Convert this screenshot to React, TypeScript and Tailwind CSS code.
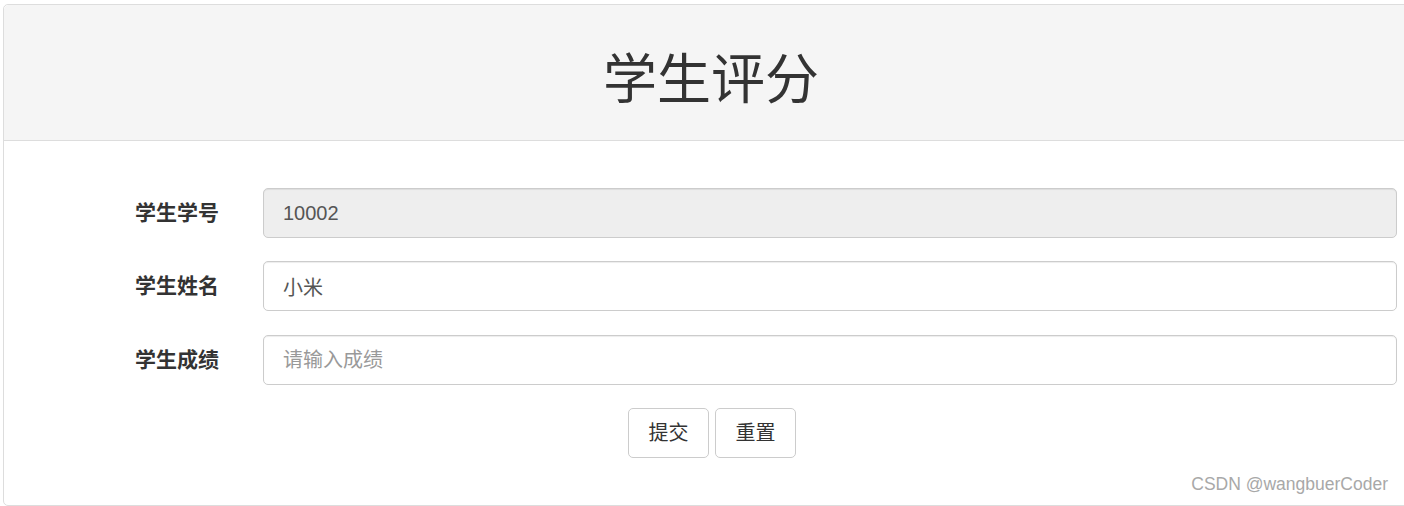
const font = "font-['Liberation_Sans','Noto_Sans_CJK_SC',sans-serif]";

function Field({
  label,
  value,
  placeholder,
  disabled,
  className = "",
}: {
  label: string;
  value?: string;
  placeholder?: string;
  disabled?: boolean;
  className?: string;
}) {
  return (
    <div className={"flex items-center h-[50px] " + className}>
      <label className="w-[215px] text-right text-[21px] font-bold text-[#333]">{label}</label>
      <input
        readOnly
        disabled={disabled}
        value={value ?? ""}
        placeholder={placeholder}
        className={
          "ml-[44px] w-[1134px] h-[50px] px-[19px] text-[20px] text-[#555] border border-[#ccc] rounded-[5px] outline-none placeholder:text-[#999] shadow-[inset_0_1px_1px_rgba(0,0,0,0.075)] " +
          (disabled ? "bg-[#eee]" : "bg-white")
        }
      />
    </div>
  );
}

export default function App() {
  return (
    <div className={`relative w-[1404px] h-[506px] overflow-hidden bg-white ${font}`}>
      <div className="ml-[3px] mt-[4px] w-[1430px] h-[502px] border border-[#ddd] rounded-[5px] bg-white">
        <div className="h-[136px] bg-[#f5f5f5] border-b border-[#ddd] rounded-t-[5px] flex items-center justify-center pt-[14px]">
          <h1 className="text-[54px] leading-none text-[#333] pr-[14px]">学生评分</h1>
        </div>
        <div className="pt-[47px] flex flex-col">
          <Field label="学生学号" value="10002" disabled />
          <Field label="学生姓名" value="小米" className="mt-[23px]" />
          <Field label="学生成绩" placeholder="请输入成绩" className="mt-[24px]" />
          <div className="mt-[23px] flex justify-center gap-[6px] pr-[12px]">
            <button className="w-[81px] h-[50px] border border-[#ccc] rounded-[5px] bg-white text-[20px] text-[#333]">提交</button>
            <button className="w-[81px] h-[50px] border border-[#ccc] rounded-[5px] bg-white text-[20px] text-[#333]">重置</button>
          </div>
        </div>
      </div>
      <span className="absolute right-[16px] bottom-[9px] text-[17.5px] text-[#a8a8a8] [text-shadow:0_0_1px_#fff]">CSDN @wangbuerCoder</span>
    </div>
  );
}
